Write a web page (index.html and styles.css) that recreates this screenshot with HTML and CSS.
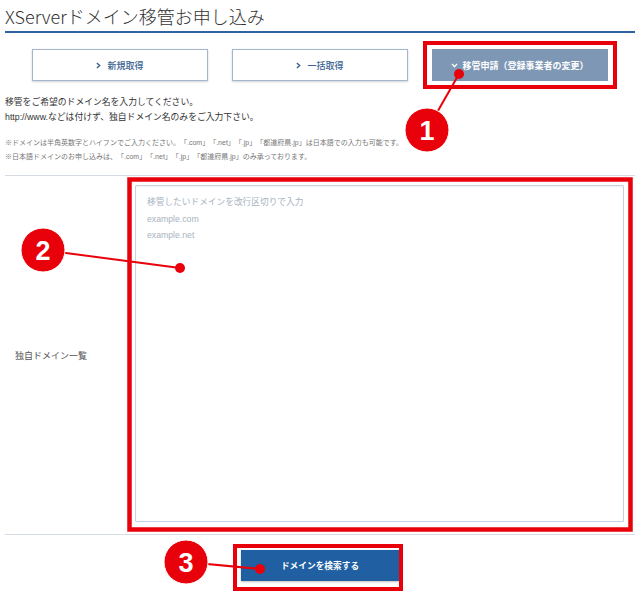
FILE: index.html
```html
<!DOCTYPE html>
<html lang="ja">
<head>
<meta charset="utf-8">
<title>XServerドメイン移管お申し込み</title>
<link rel="stylesheet" href="styles.css">
</head>
<body>
<div class="page">
  <h1 class="title">XServerドメイン移管お申し込み</h1>

  <div class="tabs">
    <button class="tab"><svg class="chev" viewBox="0 0 6 8" width="5" height="7"><path d="M1 1 L4.5 4 L1 7" fill="none" stroke="currentColor" stroke-width="1.6"/></svg>新規取得</button>
    <button class="tab"><svg class="chev" viewBox="0 0 6 8" width="5" height="7"><path d="M1 1 L4.5 4 L1 7" fill="none" stroke="currentColor" stroke-width="1.6"/></svg>一括取得</button>
    <button class="tab active"><svg class="chev" viewBox="0 0 8 6" width="7" height="5"><path d="M1 1 L4 4.5 L7 1" fill="none" stroke="currentColor" stroke-width="1.6"/></svg>移管申請（登録事業者の変更）</button>
  </div>

  <p class="intro">移管をご希望のドメイン名を入力してください。<br>http://www.などは付けず、独自ドメイン名のみをご入力下さい。</p>
  <p class="notes">※ドメインは半角英数字とハイフンでご入力ください。「.com」「.net」「.jp」「都道府県.jp」は日本語での入力も可能です。<br>※日本語ドメインのお申し込みは、「.com」「.net」「.jp」「都道府県.jp」のみ承っております。</p>

  <div class="form-row">
    <div class="label">独自ドメイン一覧</div>
    <div class="field">
      <textarea class="domains" placeholder="移管したいドメインを改行区切りで入力&#10;example.com&#10;example.net"></textarea>
    </div>
  </div>

  <div class="actions">
    <button class="search">ドメインを検索する</button>
  </div>
</div>

<svg class="annotations" width="640" height="593" viewBox="0 0 640 593">
  <g fill="none" stroke="#e8000b">
    <rect x="425" y="43" width="190" height="44" stroke-width="4"/>
    <rect x="129.5" y="179.5" width="501" height="350" stroke-width="4.5"/>
    <rect x="235" y="546" width="166" height="43" stroke-width="4"/>
  </g>
  <g stroke="#e8000b" stroke-width="2">
    <line x1="427" y1="130" x2="459" y2="74"/>
    <line x1="43" y1="250" x2="180" y2="268"/>
    <line x1="186" y1="562" x2="260" y2="569"/>
  </g>
  <g fill="#e8000b">
    <circle cx="459" cy="74" r="5"/>
    <circle cx="180" cy="268" r="5"/>
    <circle cx="260" cy="569" r="5"/>
  </g>
  <g fill="#e8000b" stroke="#ffffff" stroke-width="1">
    <circle cx="427" cy="130" r="22"/>
    <circle cx="43" cy="250" r="22"/>
    <circle cx="186" cy="562" r="22"/>
  </g>
  <g class="num">
    <text x="427" y="140" text-anchor="middle">1</text>
    <text x="43" y="260" text-anchor="middle">2</text>
    <text x="186" y="572" text-anchor="middle">3</text>
  </g>
</svg>
</body>
</html>
```

FILE: styles.css
```css
html, body {
  margin: 0;
  padding: 0;
  background: #ffffff;
}

body {
  position: relative;
  width: 640px;
  height: 593px;
  overflow: hidden;
  font-family: "Liberation Sans", "Noto Sans CJK JP", sans-serif;
  color: #333333;
  text-spacing-trim: space-all;
}

.page {
  padding: 0 5px;
}

.title {
  margin: 0;
  padding-top: 1px;
  height: 30px;
  line-height: 30px;
  font-family: "Noto Sans CJK JP", sans-serif;
  font-size: 18px;
  font-weight: 300;
  color: #333333;
  border-bottom: 2px solid #2f64a0;
}

.tabs {
  display: flex;
  gap: 24px;
  padding-left: 27px;
  margin-top: 16px;
}

.tab {
  width: 176px;
  height: 32px;
  box-sizing: border-box;
  border: 1px solid #a3b6cd;
  background: #ffffff;
  color: #3a6190;
  font-family: "Noto Sans CJK JP", sans-serif;
  font-size: 9px;
  font-weight: 500;
  display: flex;
  align-items: center;
  justify-content: center;
  gap: 6px;
  padding: 0;
  box-shadow: 0 1px 2px rgba(0, 0, 0, 0.18);
  text-spacing-trim: space-all;
}

.tab.active {
  background: #7d97b5;
  border-color: #7d97b5;
  color: #ffffff;
  font-weight: 700;
  gap: 4px;
  box-shadow: none;
}

.chev {
  display: block;
}

.intro {
  margin: 14px 0 0;
  font-size: 8.8px;
  line-height: 15px;
  color: #333333;
}

.notes {
  margin: 11px 0 0;
  font-size: 7px;
  line-height: 14px;
  color: #777777;
  white-space: nowrap;
}

.form-row {
  margin-top: 11px;
  display: flex;
  align-items: center;
  border-top: 1px solid #d6dce4;
  border-bottom: 1px solid #d6dce4;
  height: 360px;
  box-sizing: border-box;
}

.label {
  width: 130px;
  padding-left: 10px;
  box-sizing: border-box;
  font-family: "Noto Sans CJK JP", sans-serif;
  font-size: 9px;
  color: #555555;
}

.field {
  flex: 1;
  padding: 9px 11px 12px 0;
  align-self: stretch;
  display: flex;
}

.domains {
  flex: 1;
  margin: 0;
  box-sizing: border-box;
  border: 1px solid #c6d1dd;
  border-radius: 1px;
  padding: 8px 11px;
  resize: none;
  font-family: "Liberation Sans", "Noto Sans CJK JP", sans-serif;
  font-size: 8.7px;
  line-height: 16.5px;
  color: #333333;
  box-shadow: inset 0 1px 2px rgba(0, 0, 0, 0.06);
}

.domains::placeholder {
  color: #a9b3c0;
}

.actions {
  display: flex;
  justify-content: center;
  padding-top: 15px;
}

.search {
  width: 158px;
  height: 31px;
  border: none;
  background: #1f5fa2;
  color: #ffffff;
  font-family: "Noto Sans CJK JP", sans-serif;
  font-size: 8.7px;
  font-weight: 700;
  box-shadow: 0 1px 2px rgba(0, 0, 0, 0.25);
  padding: 0;
}

.annotations {
  position: absolute;
  top: 0;
  left: 0;
  pointer-events: none;
}

.num text {
  fill: #ffffff;
  font-family: "Liberation Sans", sans-serif;
  font-weight: 700;
  font-size: 27px;
}
```
